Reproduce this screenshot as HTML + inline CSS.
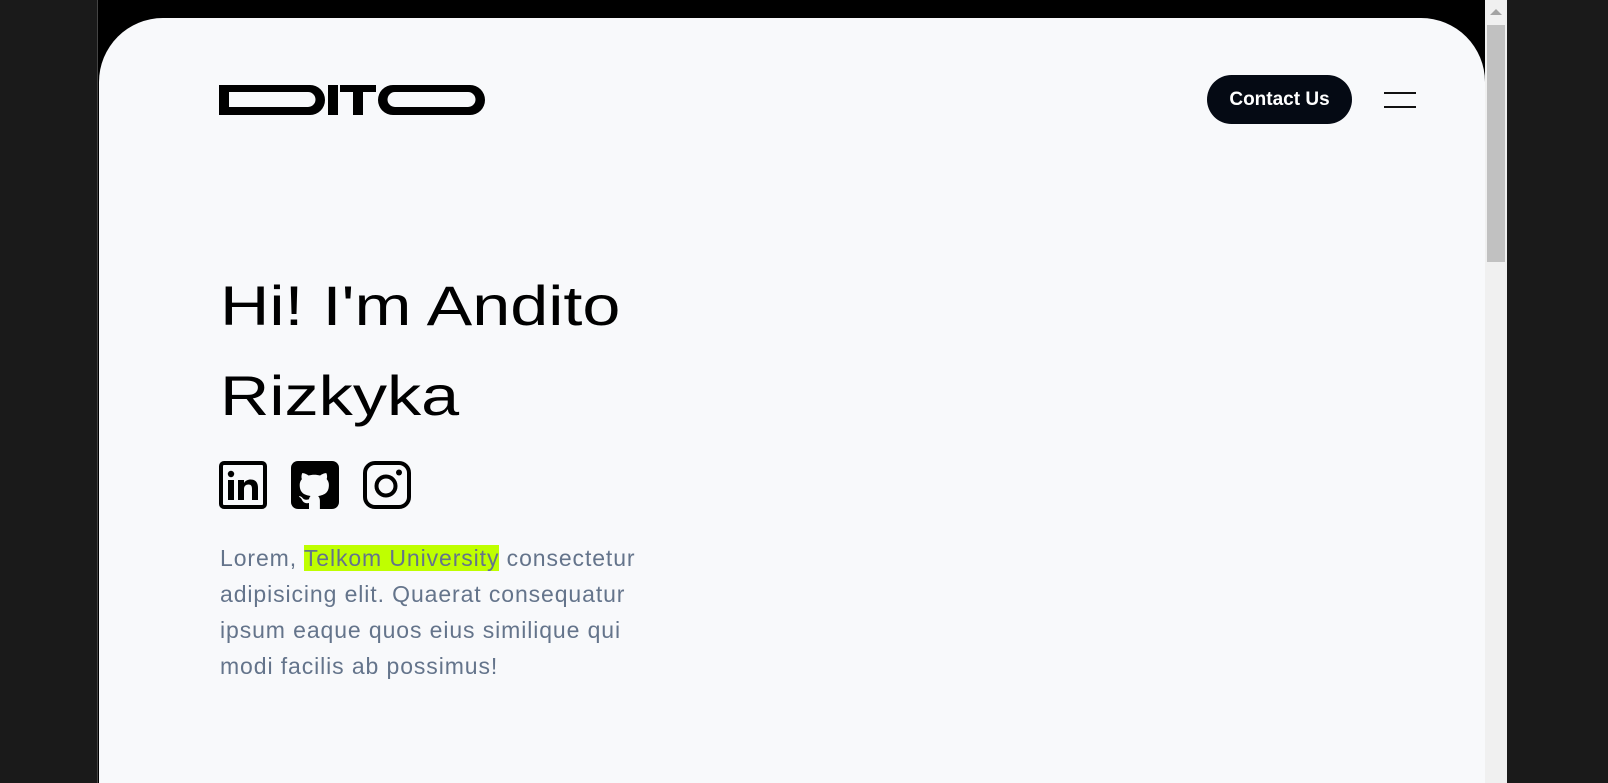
<!DOCTYPE html>
<html><head><meta charset="utf-8"><style>
*{margin:0;padding:0;box-sizing:border-box}
html,body{width:1608px;height:783px;overflow:hidden;background:#1a1a1a;font-family:"Liberation Sans",sans-serif}
.line{position:absolute;left:97px;top:0;width:1px;height:783px;background:#444}
.blk{position:absolute;left:98px;top:0;width:1387px;height:783px;background:#000}
.card{position:absolute;left:99px;top:18px;width:1386px;height:765px;background:#f8f9fb;border-radius:64px 64px 0 0}
.sb{position:absolute;left:1485px;top:0;width:22px;height:783px;background:#f0f0f0}
.thumb{position:absolute;left:1487px;top:25px;width:18px;height:237px;background:#c1c1c1}
.arr{position:absolute;left:1490px;top:9px;width:0;height:0;border-left:6px solid transparent;border-right:6px solid transparent;border-bottom:6px solid #a3a3a3}
.btn{position:absolute;left:1207px;top:75px;width:145px;height:49px;border-radius:25px;background:#050a14;color:#fff;font-weight:bold;font-size:19px;line-height:50px;text-align:center}
.hb{position:absolute;left:1384px;width:32px;height:2px;background:#111}
h1{position:absolute;left:220px;top:261px;font-weight:normal;font-size:56px;line-height:90px;color:#000;transform:scaleX(1.22);transform-origin:0 0;white-space:nowrap}
p{position:absolute;left:220px;top:540px;width:436px;font-size:23px;line-height:36px;letter-spacing:0.9px;color:#64748b}
mark{background:#bfff00;color:#64748b}
svg{position:absolute}
</style></head><body>
<div class="line"></div><div class="blk"></div><div class="card"></div>
<div class="sb"></div><div class="thumb"></div><div class="arr"></div>
<svg style="left:219px;top:85px" width="266" height="30" viewBox="0 0 266 30">
<path d="M0 0H91a15 15 0 0 1 0 30H0Z M10 7V22H89a7.5 7.5 0 0 0 0-15Z" fill="#000" fill-rule="evenodd"/>
<rect x="109" y="0" width="10" height="30"/>
<path d="M121 0H157V7H144V30H134V7H121Z"/>
<path d="M174 0H251a15 15 0 0 1 0 30H174a15 15 0 0 1 0-30Z M176 7a7.5 7.5 0 0 0 0 15H249a7.5 7.5 0 0 0 0-15Z" fill-rule="evenodd"/>
</svg>
<div class="btn">Contact Us</div>
<div class="hb" style="top:92px"></div><div class="hb" style="top:106px"></div>
<h1>Hi! I'm Andito<br>Rizkyka</h1>
<svg style="left:219px;top:461px" width="48" height="48" viewBox="0 0 48 48">
<rect x="2" y="2" width="44" height="44" rx="3" fill="none" stroke="#000" stroke-width="4"/>
<circle cx="12" cy="13" r="3.2"/><rect x="9" y="19" width="6" height="20"/>
<path d="M19 19h6v3c1.5-2.5 4-3.5 6.5-3.5 5 0 7.5 3 7.5 8.5V39h-6V28c0-3-1-4.5-3.5-4.5S25 25 25 28v11h-6Z"/>
</svg>
<svg style="left:291px;top:461px" width="48" height="48" viewBox="0 0 48 48">
<rect x="0" y="0" width="48" height="48" rx="7"/>
<path fill="#f8f9fb" d="M18 48v-6c-5 1-6.5-2-7.5-4-.6-1.4-2.5-2-2.5-2.6 0-.6 2.2-.3 3.6 1.6 1.3 1.6 3 2.3 6.4 1.3.2-1.4.8-2.6 1.6-3.3C13 34 8.7 31.7 8.7 23.9c0-2.3.8-4.3 2.2-5.8-.3-.8-.9-3 .3-5.9 0 0 2-.6 6.3 2.3 1.8-.5 3.8-.8 5.8-.8s4 .3 5.8.8c4.3-2.9 6.3-2.3 6.3-2.3 1.2 2.9.5 5.1.3 5.9 1.4 1.5 2.2 3.5 2.2 5.8 0 7.8-4.3 10.1-10.8 11.2 1 .9 1.8 2.4 1.8 4.4V48Z"/>
</svg>
<svg style="left:363px;top:461px" width="48" height="48" viewBox="0 0 48 48">
<rect x="2" y="2" width="44" height="44" rx="10" fill="none" stroke="#000" stroke-width="4"/>
<circle cx="23" cy="25" r="9.5" fill="none" stroke="#000" stroke-width="4"/>
<circle cx="36" cy="11.5" r="3"/>
</svg>
<p>Lorem, <mark>Telkom University</mark> consectetur adipisicing elit. Quaerat consequatur ipsum eaque quos eius similique qui modi facilis ab possimus!</p>
</body></html>
